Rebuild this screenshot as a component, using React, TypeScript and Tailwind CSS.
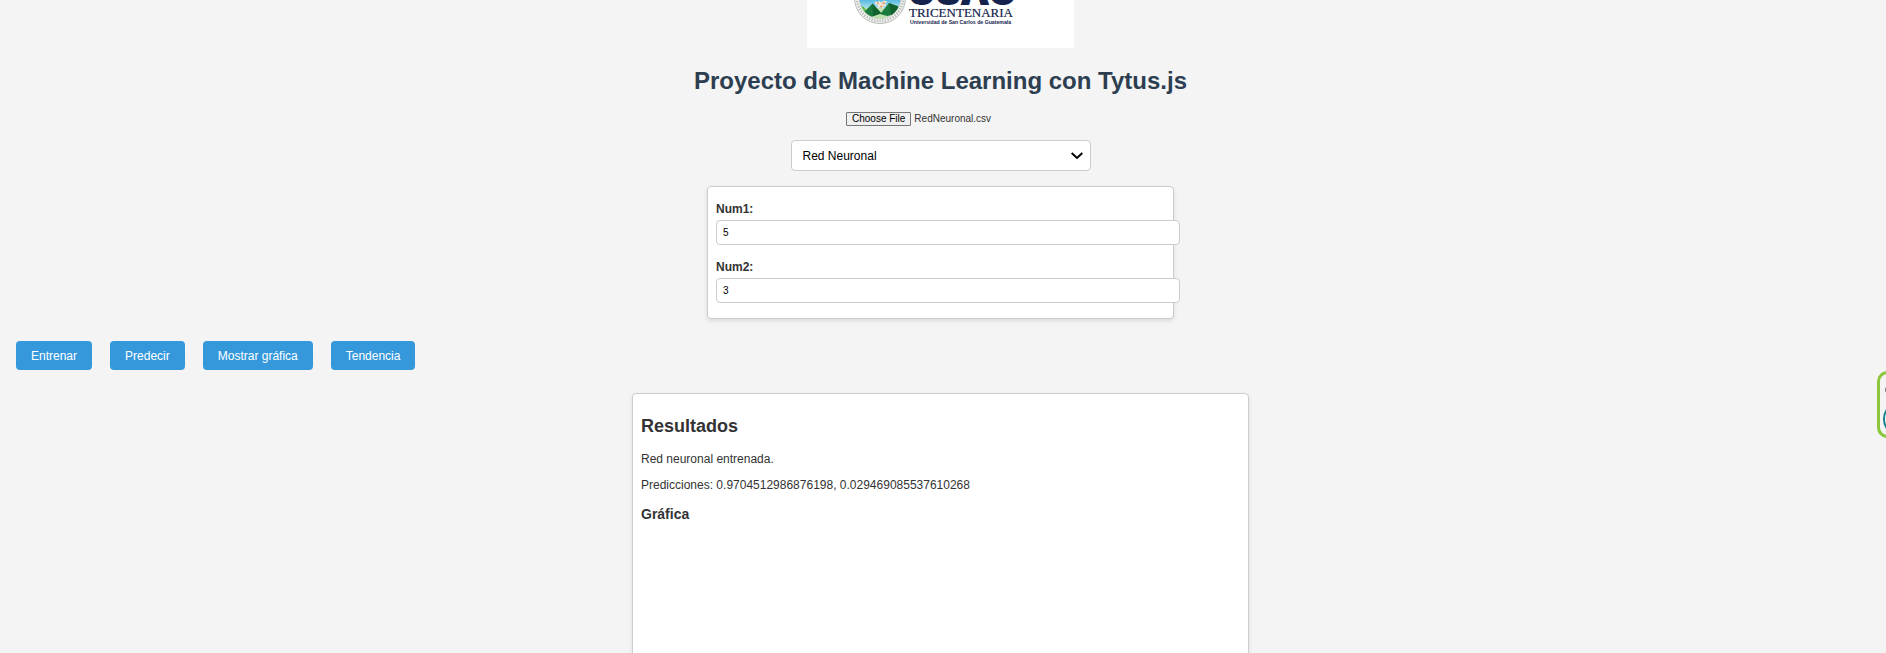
import { useEffect, useRef } from 'react';

const params = [
  { id: 'num1', label: 'Num1:', value: '5' },
  { id: 'num2', label: 'Num2:', value: '3' },
];

const actions = ['Entrenar', 'Predecir', 'Mostrar gráfica', 'Tendencia'];

function Logo() {
  return (
    <svg
      className="block h-12 w-[267px] bg-white"
      viewBox="0 0 267 48"
      role="img"
      aria-label="USAC Tricentenaria"
    >
      <defs>
        <clipPath id="shield">
          <circle cx="73" cy="-2" r="20.5" />
        </clipPath>
        <linearGradient id="sky" x1="0" y1="0" x2="0" y2="1">
          <stop offset="0.6" stopColor="#2fa9dc" />
          <stop offset="1" stopColor="#c4e8f0" />
        </linearGradient>
      </defs>
      <circle cx="73" cy="-2" r="25.5" fill="#f6f6f4" stroke="#a3a8a5" strokeWidth="0.8" />
      <circle cx="73" cy="-2" r="23" fill="none" stroke="#b9bebb" strokeWidth="2.6" strokeDasharray="1.4 1.3" />
      <circle cx="73" cy="-2" r="20.8" fill="#fff" stroke="#a3a8a5" strokeWidth="0.6" />
      <g clipPath="url(#shield)">
        <rect x="50" y="-24" width="46" height="34" fill="url(#sky)" />
        <path d="M50 8 H96 V24 H50z" fill="#bfe0b0" />
        <path d="M50 5 L57 7 L60 12 L52 14z" fill="#5cb84a" />
        <path d="M55 14 L65.500 3.500 L74 13 L82 3 L96 8 L90 14 L80 16 L73 14 L64 17z" fill="#1b7a3e" />
        <path d="M65.500 3.500 L74 13 L66 16z" fill="#12612f" />
        <path d="M82 3 L84 15 L90 14 L94 8z" fill="#12612f" />
      </g>
      <path d="M68 1l3 1.500 1-2 2 2 3-2 3 1-2 2.500 1 2-2.500 0-1 3-2-2-3 1 0.500-3-3-1z" fill="#f1e3d3" />
      <path d="M70 2l2 1-1 1.500zM75 3l3-1-1 2.500zM73 6l2.500-0.500-1 2.500z" fill="#e5873c" />
      <text x="101" y="5" fontSize="38" fontWeight="900" fill="#14234d" aria-hidden="true" className="font-['Inter',sans-serif]">
        USAC
      </text>
      <text x="102" y="17" fontSize="13" fill="#14234d" stroke="#14234d" strokeWidth="0.2" className="font-['Liberation_Serif',serif]">
        TRICENTENARIA
      </text>
      <text x="103" y="24" fontSize="5.200" fontWeight="700" fill="#14234d" className="font-['Liberation_Sans',sans-serif]">
        Universidad de San Carlos de Guatemala
      </text>
    </svg>
  );
}

function FileField() {
  const ref = useRef<HTMLInputElement>(null);

  useEffect(() => {
    const transfer = new DataTransfer();
    transfer.items.add(new File([''], 'RedNeuronal.csv', { type: 'text/csv' }));
    if (ref.current) ref.current.files = transfer.files;
  }, []);

  return (
    <input
      ref={ref}
      type="file"
      accept=".csv"
      aria-label="Archivo CSV"
      className="mt-[15px] block h-4 w-[189px] text-[10px] leading-3 file:mr-[3px] file:h-[14px] file:rounded-[1px] file:border file:border-solid file:border-[#767676] file:bg-[#efefef] file:px-[5px] file:text-[10px] file:leading-3 file:text-black"
    />
  );
}

function Widget() {
  return (
    <button type="button" aria-label="Abrir asistente" className="fixed top-[371px] right-0 block h-[67px] w-[9px] overflow-hidden">
      <svg width="9" height="67" viewBox="0 0 9 67" aria-hidden="true">
        <rect x="1.5" y="1.5" width="40" height="64" rx="9" fill="#f4f4f4" stroke="#8cc63f" strokeWidth="3" />
        <circle cx="11.500" cy="19" r="3.500" fill="#777" />
        <ellipse cx="15" cy="48" rx="8" ry="12" fill="#fff" stroke="#12808c" strokeWidth="2" />
      </svg>
    </button>
  );
}

export default function App() {
  return (
    <div className="min-h-screen bg-[#f4f4f4] pr-[21px] pl-4 font-['Liberation_Sans',Arial,sans-serif] text-xs text-[#333]">
      <header className="flex flex-col items-center">
        <Logo />
        <h1 className="mt-[17px] text-2xl leading-8 font-bold text-[#2c3e50]">Proyecto de Machine Learning con Tytus.js</h1>
      </header>

      <main>
        <div className="flex flex-col items-center">
          <FileField />

          <div className="relative mt-3 w-[300px]">
            <select
              aria-label="Modelo"
              defaultValue="Red Neuronal"
              className="block h-[31px] w-full appearance-none rounded-[4px] border border-[#ccc] bg-white px-[11px] text-black"
            >
              <option>Red Neuronal</option>
            </select>
            <svg
              className="pointer-events-none absolute top-3 right-2 h-2 w-3"
              viewBox="0 0 12 8"
              fill="none"
              stroke="#000"
              strokeWidth="2"
              aria-hidden="true"
            >
              <path d="M0.7 1 L6 6 L11.3 1" />
            </svg>
          </div>

          <form className="mt-[15px] flex w-[467px] flex-col gap-[15px] rounded-[4px] border border-[#ccc] bg-white px-2 py-[15px] shadow-[0_2px_4px_rgba(0,0,0,0.1)]">
            {params.map((param) => (
              <div key={param.id}>
                <label htmlFor={param.id} className="mb-1 block leading-[14px] font-bold">
                  {param.label}
                </label>
                <input
                  id={param.id}
                  type="text"
                  defaultValue={param.value}
                  className="block h-[25px] w-[464px] rounded-[4px] border border-[#ccc] bg-white px-[6px] text-[10px] text-black"
                />
              </div>
            ))}
          </form>
        </div>

        <div className="mt-[22px] flex gap-[18px]">
          {actions.map((action) => (
            <button key={action} type="button" className="h-[29px] rounded-[4px] bg-[#3498db] px-[15px] text-white">
              {action}
            </button>
          ))}
        </div>

        <section className="mx-auto mt-[23px] h-[450px] w-[617px] rounded-[4px] border border-[#ccc] bg-white px-2 pt-[22px] shadow-[0_2px_4px_rgba(0,0,0,0.1)]">
          <h2 className="text-lg leading-5 font-bold">Resultados</h2>
          <p className="mt-4 leading-[14px]">Red neuronal entrenada.</p>
          <p className="mt-3 leading-[14px]">Predicciones: 0.9704512986876198, 0.029469085537610268</p>
          <h3 className="mt-[14px] text-sm leading-4 font-bold">Gráfica</h3>
        </section>
      </main>

      <Widget />
    </div>
  );
}
